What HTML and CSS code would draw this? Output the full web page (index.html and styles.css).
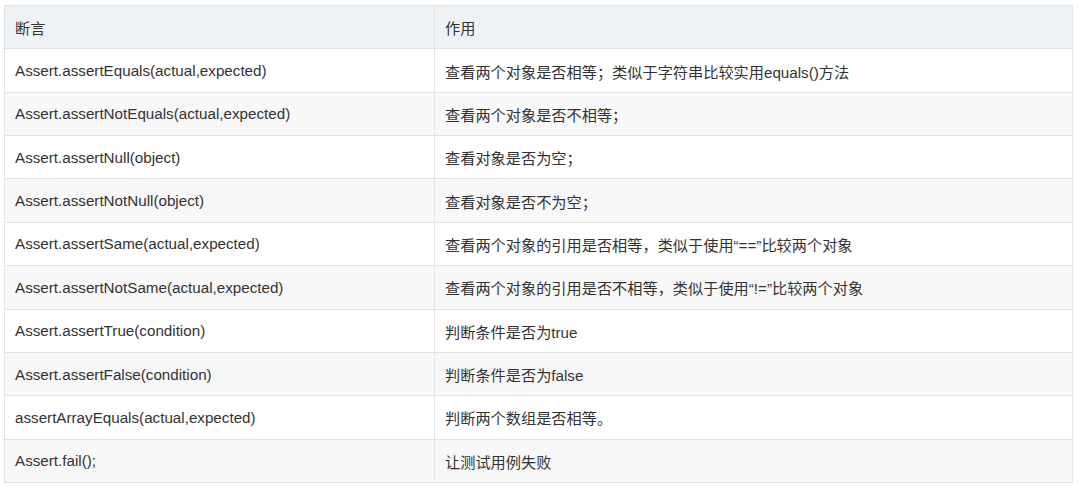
FILE: index.html
```html
<!DOCTYPE html>
<html lang="zh">
<head>
<meta charset="utf-8">
<link rel="stylesheet" href="styles.css">
</head>
<body>
<table class="tbl">
  <thead>
    <tr><th class="c1">断言</th><th>作用</th></tr>
  </thead>
  <tbody>
    <tr><td class="c1">Assert.assertEquals(actual,expected)</td><td>查看两个对象是否相等；类似于字符串比较实用equals()方法</td></tr>
    <tr><td class="c1">Assert.assertNotEquals(actual,expected)</td><td>查看两个对象是否不相等；</td></tr>
    <tr><td class="c1">Assert.assertNull(object)</td><td>查看对象是否为空；</td></tr>
    <tr><td class="c1">Assert.assertNotNull(object)</td><td>查看对象是否不为空；</td></tr>
    <tr><td class="c1">Assert.assertSame(actual,expected)</td><td>查看两个对象的引用是否相等，类似于使用“==”比较两个对象</td></tr>
    <tr><td class="c1">Assert.assertNotSame(actual,expected)</td><td>查看两个对象的引用是否不相等，类似于使用“!=”比较两个对象</td></tr>
    <tr><td class="c1">Assert.assertTrue(condition)</td><td>判断条件是否为true</td></tr>
    <tr><td class="c1">Assert.assertFalse(condition)</td><td>判断条件是否为false</td></tr>
    <tr><td class="c1">assertArrayEquals(actual,expected)</td><td>判断两个数组是否相等。</td></tr>
    <tr><td class="c1">Assert.fail();</td><td>让测试用例失败</td></tr>
  </tbody>
</table>
</body>
</html>
```
FILE: styles.css
```css
html, body {
  margin: 0;
  padding: 0;
  background: #ffffff;
}
body {
  padding: 5px 0 0 4px;
  font-family: "Liberation Sans", "Noto Sans CJK SC", sans-serif;
  font-size: 15.2px;
  color: #333333;
}
.tbl {
  border-collapse: collapse;
  width: 1069px;
  table-layout: fixed;
  border: 1px solid #e3e3e3;
}
.tbl th, .tbl td {
  border: 1px solid #e3e3e3;
  height: 43.36px;
  padding: 0 10px;
  text-align: left;
  font-weight: normal;
  vertical-align: middle;
  box-sizing: border-box;
  white-space: nowrap;
}
.tbl th.c1, .tbl td.c1 {
  width: 430px;
}
.tbl thead th {
  background: #eff2f5;
}
.tbl tbody tr:nth-child(even) td {
  background: #f8f8f8;
}
```
